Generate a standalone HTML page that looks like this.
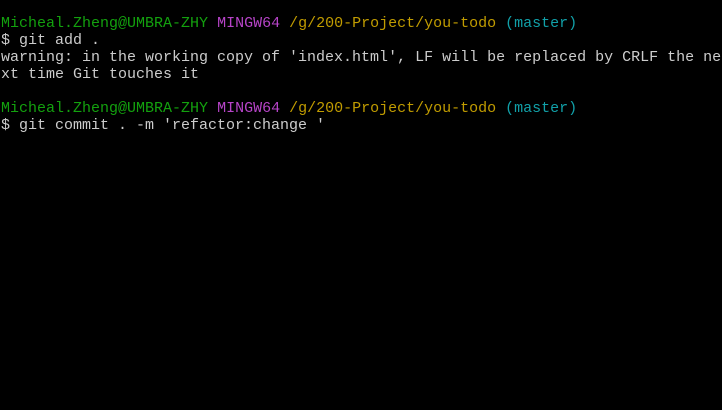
<!DOCTYPE html>
<html><head><meta charset="utf-8"><style>
html,body{margin:0;padding:0;background:#000;width:722px;height:410px;overflow:hidden}
pre{margin:0;position:absolute;left:1px;top:15px;font-family:"Liberation Mono","DejaVu Sans Mono",monospace;font-size:15px;line-height:17px;color:#cccccc;white-space:pre}
.g{color:#13a10e}.m{color:#b744c8}.y{color:#c19c00}.c{color:#11a0a8}
</style></head><body><pre><span class="g">Micheal.Zheng@UMBRA-ZHY</span> <span class="m">MINGW64</span> <span class="y">/g/200-Project/you-todo</span> <span class="c">(master)</span>
$ git add .
warning: in the working copy of 'index.html', LF will be replaced by CRLF the ne
xt time Git touches it

<span class="g">Micheal.Zheng@UMBRA-ZHY</span> <span class="m">MINGW64</span> <span class="y">/g/200-Project/you-todo</span> <span class="c">(master)</span>
$ git commit . -m 'refactor:change '</pre></body></html>
